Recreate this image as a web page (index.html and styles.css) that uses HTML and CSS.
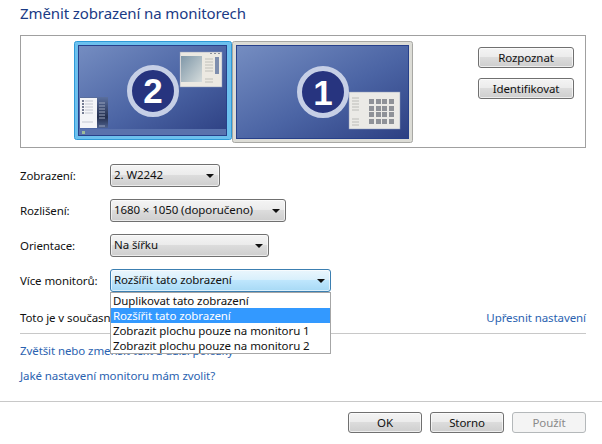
FILE: index.html
```html
<!DOCTYPE html>
<html lang="cs">
<head>
<meta charset="utf-8">
<title>Změnit zobrazení na monitorech</title>
<link rel="stylesheet" href="styles.css">
</head>
<body>
<div class="page">
  <div class="content">
    <h1 class="title">Změnit zobrazení na monitorech</h1>
    <section class="preview">
      <div class="monitors">
        <svg class="monitor-two" width="158" height="99" viewBox="0 0 158 99">
          <defs>
            <linearGradient id="screen" x1="0" y1="0" x2="1" y2="1">
              <stop offset="0" stop-color="#758dc1"/>
              <stop offset="0.55" stop-color="#4b64a4"/>
              <stop offset="1" stop-color="#2d4083"/>
            </linearGradient>
            <linearGradient id="photo" x1="0" y1="0" x2="1" y2="1">
              <stop offset="0" stop-color="#7f97a8"/>
              <stop offset="1" stop-color="#d5dcdc"/>
            </linearGradient>
            <linearGradient id="dark" x1="0" y1="0" x2="0" y2="1">
              <stop offset="0" stop-color="#5a6f9e"/>
              <stop offset="0.65" stop-color="#242f4e"/>
              <stop offset="1" stop-color="#4f628f"/>
            </linearGradient>
          </defs>
          <rect x="0.5" y="0.5" width="157" height="98" rx="2" fill="#6cc0ee" stroke="#2e9ad8"/>
          <rect x="4.5" y="4.5" width="148" height="90" fill="url(#screen)" stroke="#27408a"/>
          <rect x="5" y="88" width="147" height="6" fill="#5a72ad"/>
          <rect x="8" y="90" width="3" height="3" fill="#9dbb9a"/>
          <rect x="106" y="11" width="42" height="35" fill="#ece9e2" stroke="#8b98b8" stroke-width="0.5"/>
          <rect x="107" y="15" width="21" height="26" fill="url(#photo)"/>
          <path d="M131 18h8M131 21h8M131 24h8M131 27h8M131 30h8M131 38h8M131 41h8" stroke="#c0c0ba" stroke-width="1"/>
          <rect x="141" y="16" width="4" height="17" fill="#7e8eae"/>
          <path d="M136 12.500h2M140 12.500h2M144 12.500h2" stroke="#8a8f99"/>
          <rect x="6" y="56" width="28" height="31" fill="url(#dark)"/>
          <rect x="6" y="57" width="17" height="30" fill="#f4f5f8"/>
          <path d="M8 60h2M8 63h2M8 66h2M8 69h2M8 72h2" stroke="#4a5470" stroke-width="1.500"/>
          <path d="M11 60h8M11 63h8M11 66h8M11 69h8M11 72h8M8 81h11" stroke="#c4c8d2"/>
          <path d="M25 62h6M25 65h6M25 68h6M25 71h6M25 74h6M25 77h6M25 85h6" stroke="#9aa4bc"/>
          <circle cx="79" cy="50" r="23.500" fill="#27347f" stroke="#c6cfe6" stroke-width="5"/>
          <text class="digit" x="79" y="62">2</text>
        </svg>
        <svg class="monitor-one" width="181" height="102" viewBox="0 0 181 102">
          <rect x="0.5" y="0.5" width="180" height="101" rx="2" fill="#dcdcd6" stroke="#a8a8a4"/>
          <rect x="4.500" y="4.500" width="172" height="93" fill="url(#screen)" stroke="#27408a"/>
          <rect x="117" y="51" width="51" height="37" fill="#ebeae6" stroke="#8b98b8" stroke-width="0.5"/>
          <path d="M120 57h7M120 60h7M120 63h7M120 66h7M120 69h7M120 78h7M120 81h7M120 84h7" stroke="#bcbcb8"/>
          <g fill="#8f9298">
            <rect x="137" y="58" width="5" height="5"/><rect x="144" y="58" width="5" height="5"/><rect x="150" y="58" width="5" height="5"/><rect x="157" y="58" width="5" height="5"/>
            <rect x="137" y="65" width="5" height="5"/><rect x="144" y="65" width="5" height="5"/><rect x="150" y="65" width="5" height="5"/><rect x="157" y="65" width="5" height="5"/>
            <rect x="137" y="71" width="5" height="5"/><rect x="144" y="71" width="5" height="5"/><rect x="150" y="71" width="5" height="5"/><rect x="157" y="71" width="5" height="5"/>
            <rect x="137" y="78" width="5" height="5"/><rect x="144" y="78" width="5" height="5"/><rect x="150" y="78" width="5" height="5"/><rect x="157" y="78" width="5" height="5"/>
          </g>
          <circle cx="91" cy="51" r="23.500" fill="#27347f" stroke="#c6cfe6" stroke-width="5"/>
          <text class="digit" x="91" y="64">1</text>
        </svg>
      </div>
      <div class="preview-actions">
        <button class="btn btn-wide" type="button">Rozpoznat</button>
        <button class="btn btn-wide" type="button">Identifikovat</button>
      </div>
    </section>
    <div class="fields">
      <div class="field">
        <span class="label">Zobrazení:</span>
        <div class="combo combo-display">2. W2242</div>
      </div>
      <div class="field">
        <span class="label">Rozlišení:</span>
        <div class="combo combo-resolution">1680 × 1050 (doporučeno)</div>
      </div>
      <div class="field">
        <span class="label">Orientace:</span>
        <div class="combo combo-orientation">Na šířku</div>
      </div>
      <div class="field">
        <span class="label">Více monitorů:</span>
        <div class="combo combo-multi is-open">
          Rozšířit tato zobrazení
          <ul class="menu">
            <li class="menu-item">Duplikovat tato zobrazení</li>
            <li class="menu-item is-selected">Rozšířit tato zobrazení</li>
            <li class="menu-item">Zobrazit plochu pouze na monitoru 1</li>
            <li class="menu-item">Zobrazit plochu pouze na monitoru 2</li>
          </ul>
        </div>
      </div>
    </div>
    <div class="status">
      <span>Toto je v současné době hlavní monitor.</span>
      <a class="link" href="#">Upřesnit nastavení</a>
    </div>
    <hr class="rule">
    <div class="links">
      <a class="link" href="#">Zvětšit nebo zmenšit text a další položky</a>
      <a class="link" href="#">Jaké nastavení monitoru mám zvolit?</a>
    </div>
  </div>
  <footer class="footer">
    <button class="btn btn-action" type="button">OK</button>
    <button class="btn btn-action" type="button">Storno</button>
    <button class="btn btn-action" type="button" disabled>Použít</button>
  </footer>
</div>
</body>
</html>
```

FILE: styles.css
```css
* { box-sizing: border-box; }

html, body {
  margin: 0;
  padding: 0;
  background: #fff;
}

.page {
  width: 602px;
  height: 444px;
  overflow: hidden;
  background: #fff;
  color: #111;
  font: 11.5px/16px "Noto Sans", "Open Sans", sans-serif;
  letter-spacing: -0.09px;
}

.content {
  padding: 0 16px 0 20px;
}

.title {
  margin: 0;
  height: 35px;
  padding-top: 2px;
  font-size: 15px;
  font-weight: 400;
  line-height: 22px;
  letter-spacing: -0.1px;
  color: #1a3a85;
}

.preview {
  display: flex;
  justify-content: space-between;
  height: 113px;
  padding: 5px 11px 0 53px;
  border: 1px solid #a0a0a0;
}

.monitors {
  display: flex;
  align-items: flex-start;
}

.digit {
  font: 700 35px "Liberation Sans", sans-serif;
  fill: #fff;
  text-anchor: middle;
  letter-spacing: 0;
}

.preview-actions {
  display: flex;
  flex-direction: column;
  gap: 10px;
  padding-top: 6px;
}

.btn {
  display: block;
  height: 21px;
  padding: 0;
  border: 1px solid #707070;
  border-radius: 3px;
  background: linear-gradient(#f4f4f4 0, #ececec 45%, #dcdcdc 50%, #cecece 100%);
  box-shadow: inset 0 0 0 1px rgba(255, 255, 255, .65);
  color: #111;
  font: inherit;
  letter-spacing: inherit;
  line-height: 17px;
}

.btn-wide { width: 96px; }
.btn-action { width: 74px; }

.btn:disabled {
  border-color: #b4b8ba;
  background: #f4f4f4;
  box-shadow: none;
  color: #8a8a8a;
}

.fields {
  display: flex;
  flex-direction: column;
  gap: 12px;
  margin-top: 16px;
}

.field {
  display: flex;
  align-items: center;
  height: 23px;
}

.label { width: 90px; }

.combo {
  position: relative;
  height: 23px;
  padding: 2px 0 0 3px;
  border: 1px solid #707070;
  border-radius: 3px;
  background: linear-gradient(#f4f4f4 0, #ececec 45%, #dcdcdc 50%, #cecece 100%);
  box-shadow: inset 0 0 0 1px rgba(255, 255, 255, .6);
}

.combo::after {
  content: "";
  position: absolute;
  top: 9px;
  right: 5px;
  border-style: solid;
  border-width: 4px 4px 0;
  border-color: #111 transparent transparent;
}

.combo-display { width: 110px; }
.combo-resolution { width: 176px; }
.combo-orientation { width: 159px; }

.combo-multi {
  width: 221px;
  border-color: #3c7fb1;
  background: linear-gradient(#eaf6fd 0, #d9f0fc 45%, #bee6fd 50%, #a7d9f5 100%);
}

.menu {
  position: absolute;
  z-index: 2;
  top: 22px;
  left: -1px;
  width: 221px;
  height: 62px;
  margin: 0;
  padding: 0;
  list-style: none;
  border: 1px solid #a6a6a6;
  background: #fff;
}

.menu-item {
  height: 15px;
  padding-left: 2px;
  line-height: 15px;
}

.menu-item.is-selected {
  background: #3399ff;
  color: #fff;
}

.status {
  display: flex;
  justify-content: space-between;
  margin-top: 18px;
}

.rule {
  height: 1px;
  margin: 7px 0 0;
  border: 0;
  background: #c8c8c8;
}

.links {
  display: flex;
  flex-direction: column;
  align-items: flex-start;
  gap: 9px;
  margin-top: 9px;
}

.link {
  color: #2a62b0;
  text-decoration: none;
}

.footer {
  display: flex;
  justify-content: flex-end;
  gap: 8px;
  margin-top: 17px;
  padding: 10px 16px 0 0;
  border-top: 1px solid #c8c8c8;
}
```
